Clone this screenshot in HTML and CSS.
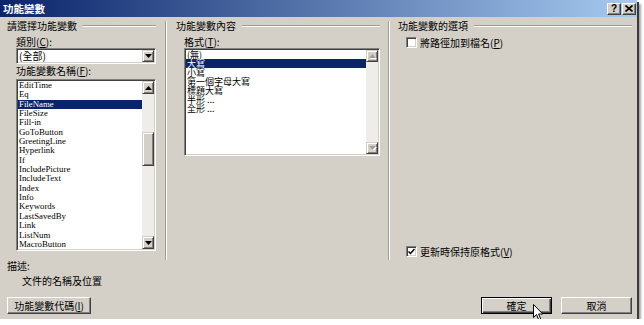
FILE: index.html
```html
<!DOCTYPE html>
<html lang="zh-Hant">
<head>
  <meta charset="UTF-8" />
  <title>功能變數</title>
  <link rel="stylesheet" href="styles.css">
</head>
<body>
  <div class="dialog">
    <div class="titlebar">
      <span class="title">功能變數</span>
      <div class="caption-btns">
        <span class="cap-btn">?</span>
        <span class="cap-btn">
          <svg width="8" height="7" viewBox="0 0 8 7"><path d="M0.5 0.5 L7.5 6.5 M7.5 0.5 L0.5 6.5" stroke="#000" stroke-width="1.6"/></svg>
        </span>
      </div>
    </div>

    <div class="content">
      <div class="columns">
        <!-- left: field picker -->
        <div class="col col-left">
          <div class="group-title"><span>請選擇功能變數</span><div class="rule"></div></div>
          <div class="inner inner-left">
            <div class="field-label">類別(<u>C</u>):</div>
            <div class="combo">
              <span class="combo-text">(全部)</span>
              <span class="sb-btn"><svg width="7" height="4" viewBox="0 0 7 4"><path d="M0 0 H7 L3.5 4 Z" fill="#000"/></svg></span>
            </div>
            <div class="field-label second">功能變數名稱(<u>F</u>):</div>
            <div class="listbox names">
              <div class="items serif">
                <div class="item">EditTime</div>
                <div class="item">Eq</div>
                <div class="item selected">FileName</div>
                <div class="item">FileSize</div>
                <div class="item">Fill-in</div>
                <div class="item">GoToButton</div>
                <div class="item">GreetingLine</div>
                <div class="item">Hyperlink</div>
                <div class="item">If</div>
                <div class="item">IncludePicture</div>
                <div class="item">IncludeText</div>
                <div class="item">Index</div>
                <div class="item">Info</div>
                <div class="item">Keywords</div>
                <div class="item">LastSavedBy</div>
                <div class="item">Link</div>
                <div class="item">ListNum</div>
                <div class="item">MacroButton</div>
              </div>
              <div class="scrollbar">
                <span class="sb-btn tall"><svg width="7" height="4" viewBox="0 0 7 4"><path d="M0 4 H7 L3.5 0 Z" fill="#000"/></svg></span>
                <div class="track">
                  <div class="thumb"></div>
                </div>
                <span class="sb-btn tall"><svg width="7" height="4" viewBox="0 0 7 4"><path d="M0 0 H7 L3.5 4 Z" fill="#000"/></svg></span>
              </div>
            </div>
          </div>
        </div>

        <div class="sep"></div>

        <!-- middle: field properties -->
        <div class="col col-mid">
          <div class="group-title"><span>功能變數內容</span><div class="rule"></div></div>
          <div class="inner inner-mid">
            <div class="field-label">格式(<u>T</u>):</div>
            <div class="listbox formats">
              <div class="items cjk-list">
                <div class="item">(無)</div>
                <div class="item selected">大寫</div>
                <div class="item">小寫</div>
                <div class="item">第一個字母大寫</div>
                <div class="item">標題大寫</div>
                <div class="item">半形 ...</div>
                <div class="item">全形 ...</div>
              </div>
              <div class="scrollbar disabled">
                <span class="sb-btn"><svg width="7" height="4" viewBox="0 0 7 4"><path d="M0 4 H7 L3.5 0 Z" fill="#a09d96"/></svg></span>
                <div class="track"></div>
                <span class="sb-btn"><svg width="7" height="4" viewBox="0 0 7 4"><path d="M0 0 H7 L3.5 4 Z" fill="#a09d96"/></svg></span>
              </div>
            </div>
          </div>
        </div>

        <div class="sep sep-narrow"></div>

        <!-- right: field options -->
        <div class="col col-right">
          <div class="group-title"><span>功能變數的選項</span><div class="rule"></div></div>
          <div class="inner inner-right">
            <div class="check-row">
              <span class="checkbox"></span>
              <span>將路徑加到檔名(<u>P</u>)</span>
            </div>
            <div class="check-row bottom">
              <span class="checkbox">
                <svg width="7" height="7" viewBox="0 0 7 7"><path d="M0.5 3.5 L2.5 5.5 L6.5 1" fill="none" stroke="#000" stroke-width="1.5"/></svg>
              </span>
              <span>更新時保持原格式(<u>V</u>)</span>
            </div>
          </div>
        </div>
      </div>

      <div class="desc">
        <div>描述:</div>
        <div class="desc-text">文件的名稱及位置</div>
      </div>

      <div class="footer">
        <button class="btn btn-codes">功能變數代碼(<u>I</u>)</button>
        <div class="footer-right">
          <button class="btn btn-default">確定</button>
          <button class="btn">取消</button>
        </div>
      </div>
    </div>

    <svg class="cursor" width="11" height="17" viewBox="0 0 11 17">
      <path d="M0.5 0.5 V13.5 L3.5 10.5 L5.8 16 L7.8 15.2 L5.6 10 H9.8 Z" fill="#fff" stroke="#000" stroke-width="1" stroke-linejoin="round"/>
    </svg>
  </div>
</body>
</html>
```

FILE: styles.css
```css
body {
  margin: 0;
  background: #fff;
  font-family: "Noto Sans CJK TC", "Noto Sans CJK SC", sans-serif;
  font-size: 10px;
  color: #000;
}
.dialog {
  position: relative;
  width: 637px;
  height: 319px;
  background: #d4d0c8;
  box-shadow: 2px 2px 0 #3a3a3a, 4px 4px 2px rgba(0,0,0,0.35);
  display: flex;
  flex-direction: column;
}
.titlebar {
  height: 17px;
  background: linear-gradient(to right, #0a246a, #a6caf0);
  display: flex;
  align-items: center;
  justify-content: space-between;
  padding: 0 1px 0 3px;
}
.title {
  color: #fff;
  font-weight: bold;
  font-size: 10.5px;
  line-height: 12px;
}
.caption-btns {
  display: flex;
  gap: 1px;
}
.cap-btn {
  width: 12px;
  height: 10px;
  background: #d4d0c8;
  border: 1px solid;
  border-color: #fff #404040 #404040 #fff;
  box-shadow: inset -1px -1px #808080;
  display: flex;
  align-items: center;
  justify-content: center;
  font-family: "Liberation Sans", sans-serif;
  font-weight: bold;
  font-size: 10px;
  line-height: 10px;
}
.content {
  flex: 1;
  padding: 3px 5px 0 7px;
  display: flex;
  flex-direction: column;
}
.columns {
  display: flex;
  height: 240px;
}
.col {
  display: flex;
  flex-direction: column;
}
.col-left { width: 149px; }
.col-mid { width: 204px; }
.col-right { width: 234px; }
.sep {
  border-left: 1px solid #a09d96;
  border-right: 1px solid #fff;
  margin: 1px 9px 0;
}
.sep-narrow {
  margin: 1px 8px 0;
}
.group-title {
  display: flex;
  align-items: center;
  height: 12px;
  line-height: 12px;
}
.group-title .rule {
  flex: 1;
  margin-left: 6px;
  border-top: 1px solid #a09d96;
  border-bottom: 1px solid #fff;
}
.inner {
  flex: 1;
  display: flex;
  flex-direction: column;
}
.inner-left { padding-left: 9px; }
.inner-mid { padding-left: 8px; }
.inner-right { padding-left: 8px; }
.field-label {
  height: 12px;
  line-height: 12px;
  margin-top: 4px;
}
.field-label.second {
  margin-top: 1px;
  margin-bottom: 2px;
}
u {
  text-decoration: underline;
}

/* sunken boxes */
.combo, .listbox {
  background: #fff;
  border: 1px solid;
  border-color: #808080 #fff #fff #808080;
  box-shadow: inset 1px 1px #404040, inset -1px -1px #d4d0c8;
  box-sizing: border-box;
  display: flex;
  padding: 1px;
}
.combo {
  height: 16px;
  align-items: center;
}
.combo-text {
  flex: 1;
  padding-left: 1px;
  line-height: 12px;
}
.listbox.names {
  height: 172px;
}
.listbox.formats {
  height: 108px;
}
.items {
  flex: 1;
}
.serif {
  font-family: "Liberation Serif", serif;
  font-size: 8.8px;
  overflow: hidden;
}
.serif .item {
  height: 9.35px;
  line-height: 9.35px;
  padding-left: 1px;
}
.cjk-list {
  font-size: 9px;
}
.cjk-list .item {
  height: 9px;
  line-height: 9px;
  padding-left: 1px;
}
.item.selected {
  background: #0a246a;
  color: #fff;
}

/* scrollbars */
.scrollbar {
  width: 12px;
  display: flex;
  flex-direction: column;
}
.sb-btn {
  width: 10px;
  height: 10px;
  background: #d4d0c8;
  border: 1px solid;
  border-color: #d4d0c8 #404040 #404040 #d4d0c8;
  box-shadow: inset 1px 1px #fff, inset -1px -1px #808080;
  display: flex;
  align-items: center;
  justify-content: center;
  flex-shrink: 0;
}
.sb-btn.tall {
  height: 11px;
}
.track {
  flex: 1;
  background: #eeede9;
}
.thumb {
  margin-top: 38px;
  height: 32px;
  background: #d4d0c8;
  border: 1px solid;
  border-color: #d4d0c8 #404040 #404040 #d4d0c8;
  box-shadow: inset 1px 1px #fff, inset -1px -1px #808080;
}
.scrollbar.disabled .sb-btn svg {
  filter: drop-shadow(1px 1px 0 #fff);
}

/* checkboxes */
.check-row {
  display: flex;
  align-items: center;
  gap: 3px;
  height: 13px;
  line-height: 12px;
  margin-top: 4px;
}
.check-row.bottom {
  margin-top: auto;
  margin-bottom: 2px;
}
.checkbox {
  width: 9px;
  height: 9px;
  background: #fff;
  border: 1px solid;
  border-color: #808080 #fff #fff #808080;
  box-shadow: inset 1px 1px #404040, inset -1px -1px #d4d0c8;
  display: flex;
  align-items: center;
  justify-content: center;
}

.desc {
  line-height: 12px;
}
.desc-text {
  margin-top: 3px;
  padding-left: 15px;
}

/* buttons */
.footer {
  margin-top: 10px;
  display: flex;
  justify-content: space-between;
}
.footer-right {
  display: flex;
  gap: 9px;
}
.btn {
  width: 71px;
  height: 17px;
  padding: 0;
  background: #d4d0c8;
  border: 1px solid;
  border-color: #fff #404040 #404040 #fff;
  box-shadow: inset -1px -1px #808080;
  font-family: inherit;
  font-size: 10px;
  color: #000;
}
.btn-codes {
  width: 84px;
}
.btn-default {
  border: 1px solid #000;
  box-shadow: inset 1px 1px #fff, inset -1px -1px #404040, inset -2px -2px #808080;
}
.cursor {
  position: absolute;
  left: 533px;
  top: 304px;
}
```
